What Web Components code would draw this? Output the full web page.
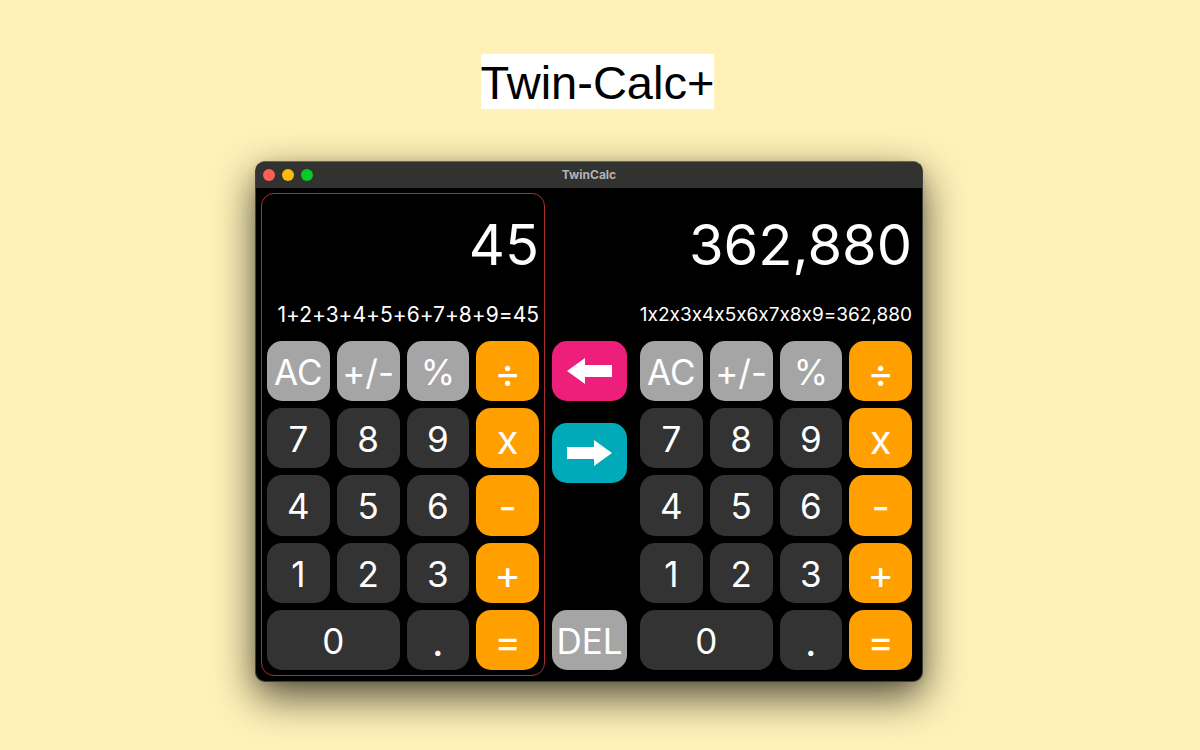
<!DOCTYPE html>
<html lang="en">
<head>
<meta charset="utf-8">
<meta name="viewport" content="width=device-width, initial-scale=1">
<title>Twin-Calc+</title>
<style>
  html, body { margin: 0; min-height: 100%; }
  body { background: #fff1b8; font-family: Inter, "Liberation Sans", sans-serif; font-variant-ligatures: no-contextual; }
</style>
</head>
<body>
<twin-stage>
  <span slot="title">Twin-Calc+</span>
  <mac-window label="TwinCalc">
    <calc-pad name="Left calculator" value="45" expression="1+2+3+4+5+6+7+8+9=45" active></calc-pad>
    <calc-transfer></calc-transfer>
    <calc-pad name="Right calculator" value="362,880" expression="1x2x3x4x5x6x7x8x9=362,880" compact></calc-pad>
  </mac-window>
</twin-stage>

<template id="twin-stage">
  <style>
    :host { display: flex; flex-direction: column; align-items: center; padding: 54px 22px 68px 0; }
    h1 { margin: 0 0 52px 17px; padding-top: 2px; background: #fff; color: #000; font: 400 47px/53px "Liberation Sans", Arial, sans-serif; }
    main { width: 100%; max-width: 668px; }
  </style>
  <h1><slot name="title"></slot></h1>
  <main><slot></slot></main>
</template>

<template id="mac-window">
  <style>
    :host { display: flex; flex-direction: column; box-sizing: border-box; min-height: 521px;
      border: 1px solid #41413b; border-top-color: #66665e; border-radius: 10px; background: #000; overflow: hidden;
      box-shadow: 0 15px 40px rgba(0,0,0,.68), 0 2px 10px rgba(0,0,0,.1); }
    header { display: grid; grid-template-columns: 1fr auto 1fr; align-items: center; height: 26px; padding: 0 7px; background: #323230; }
    .lights { display: flex; gap: 7px; }
    .lights button { width: 12px; height: 12px; padding: 0; border: 0; border-radius: 50%; background: #ff5f57; }
    .lights .min { background: #febc09; }
    .lights .max { background: #06cb27; }
    h2 { margin: 0; color: #b3b3b2; font-size: 12px; line-height: 16px; font-weight: 700; }
    .body { flex: 1; display: grid; grid-template-columns: 284fr 89fr 284fr; padding: 5px 4px 5px 5px; }
  </style>
  <header>
    <div class="lights">
      <button aria-label="Close"></button><button class="min" aria-label="Minimise"></button><button class="max" aria-label="Zoom"></button>
    </div>
    <h2></h2>
  </header>
  <div class="body"><slot></slot></div>
</template>

<template id="calc-pad">
  <style>
    :host { display: flex; flex-direction: column; box-sizing: border-box; min-width: 0; padding: 5px; border: 1px solid transparent; border-radius: 13px; color: #fff; }
    :host([active]) { border-color: #a5302c; }
    .display { display: flex; flex-direction: column; align-items: flex-end; height: 142px; }
    output { white-space: nowrap; }
    .value { font-size: 56px; line-height: 92px; }
    .expression { font-size: 21px; line-height: 48px; }
    :host([compact]) .expression { font-size: 19px; }
    .keys { flex: 1; display: grid; grid-template-columns: repeat(4, 1fr); grid-auto-rows: 1fr; gap: 7px; }
    .wide { grid-column: span 2; }
  </style>
  <div class="display"><output class="value"></output><output class="expression"></output></div>
  <div class="keys">
    <calc-key kind="fn">AC</calc-key><calc-key kind="fn">+/-</calc-key><calc-key kind="fn">%</calc-key><calc-key kind="op" large>÷</calc-key>
    <calc-key>7</calc-key><calc-key>8</calc-key><calc-key>9</calc-key><calc-key kind="op" large>x</calc-key>
    <calc-key>4</calc-key><calc-key>5</calc-key><calc-key>6</calc-key><calc-key kind="op" large>-</calc-key>
    <calc-key>1</calc-key><calc-key>2</calc-key><calc-key>3</calc-key><calc-key kind="op" large>+</calc-key>
    <calc-key class="wide">0</calc-key><calc-key large>.</calc-key><calc-key kind="op" large>=</calc-key>
  </div>
</template>

<template id="calc-key">
  <style>
    :host { display: grid; min-width: 0; min-height: 60px; }
    button { display: flex; align-items: center; justify-content: center; min-width: 0; margin: 0; padding: 2px 0 0; border: 0;
      border-radius: 15px; background: #333; color: #fff; font-family: inherit; font-variant-ligatures: inherit; font-size: 35px; line-height: 44px; white-space: nowrap; }
    :host([kind="fn"]) button { background: #a5a5a5; }
    :host([kind="op"]) button { background: #ff9f00; }
    :host([kind="left"]) button { padding: 0; background: #ee1f7a; }
    :host([kind="right"]) button { padding: 0; background: #00aab9; }
    :host([large]) button { font-size: 40px; padding-top: 4px; }
  </style>
  <button><slot></slot></button>
</template>

<template id="calc-transfer">
  <style>
    :host { display: flex; flex-direction: column; padding: 148px 7px 6px; }
    .right { margin-top: 22px; }
    .del { margin-top: auto; }
    svg { display: block; width: 45px; height: 28px; fill: #fff; }
  </style>
  <calc-key kind="left" label="Copy to left"><svg viewBox="0 0 45 28" aria-hidden="true"><path d="M0 14 18 1V8H45V20H18V27Z"/></svg></calc-key>
  <calc-key class="right" kind="right" label="Copy to right"><svg viewBox="0 0 45 28" aria-hidden="true"><path d="M45 14 27 1V8H0V20H27V27Z"/></svg></calc-key>
  <calc-key class="del" kind="fn">DEL</calc-key>
</template>

<script>
  class TemplateElement extends HTMLElement {
    constructor() {
      super();
      this.attachShadow({ mode: 'open' })
        .append(document.getElementById(this.localName).content.cloneNode(true));
    }
    part$(selector) { return this.shadowRoot.querySelector(selector); }
  }

  class CalcKey extends TemplateElement {
    connectedCallback() {
      if (this.hasAttribute('label')) this.part$('button').setAttribute('aria-label', this.getAttribute('label'));
    }
  }

  class CalcPad extends TemplateElement {
    connectedCallback() {
      this.setAttribute('role', 'group');
      this.setAttribute('aria-label', this.getAttribute('name'));
      this.part$('.value').textContent = this.getAttribute('value');
      this.part$('.expression').textContent = this.getAttribute('expression');
    }
  }

  class MacWindow extends TemplateElement {
    connectedCallback() { this.part$('h2').textContent = this.getAttribute('label'); }
  }

  customElements.define('calc-key', CalcKey);
  customElements.define('calc-transfer', class extends TemplateElement {});
  customElements.define('calc-pad', CalcPad);
  customElements.define('mac-window', MacWindow);
  customElements.define('twin-stage', class extends TemplateElement {});
</script>
</body>
</html>
